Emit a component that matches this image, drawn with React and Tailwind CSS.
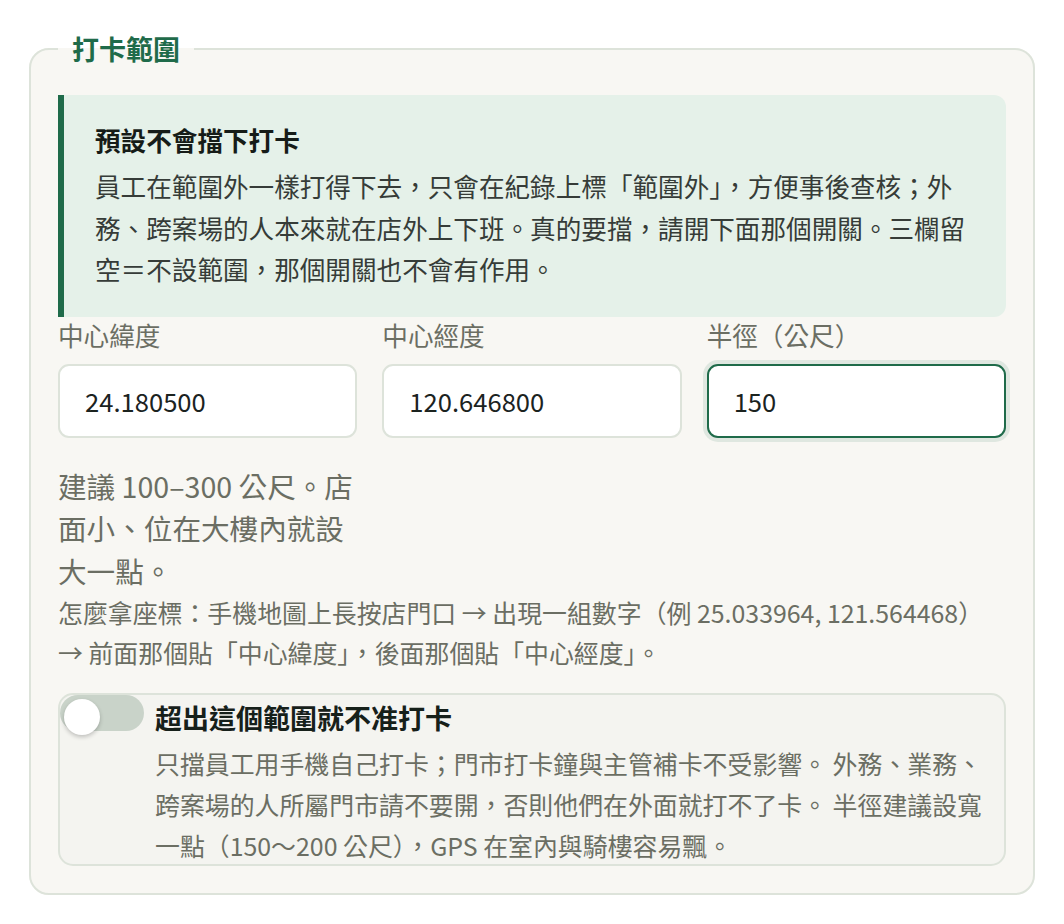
import React from "react";

function Field({ label, value, active }) {
  return (
    <div className="flex flex-col">
      <label className="text-[25.6px] leading-[36px] text-[#6b6e63]">{label}</label>
      <input
        defaultValue={value}
        className={
          active
            ? "mt-[11px] h-[74px] w-full rounded-[11px] border-2 border-[#1f6b4a] bg-white px-[25px] text-[25.6px] text-[#1b231f] outline-none ring-4 ring-[#dfe7e0]"
            : "mt-[11px] h-[74px] w-full rounded-[11px] border-2 border-[#dde3da] bg-white px-[25px] text-[25.6px] text-[#1b231f] outline-none"
        }
      />
    </div>
  );
}

export default function App() {
  return (
    <div className="bg-white p-[29px] font-[family-name:'Noto_Sans_CJK_TC','Noto_Sans',sans-serif]">
      <fieldset className="rounded-[20px] border-2 border-[#dde3da] bg-[#f8f7f3] px-[27px] pb-[27px] pt-[27px]">
        <legend className="ml-0 px-[14px] text-[27px] font-bold leading-[39px] text-[#1f6b4a]">
          打卡範圍
        </legend>

        {/* default-behaviour notice */}
        <div className="rounded-r-[12px] border-l-[6px] border-[#1f6b4a] bg-[#e5f1e9] pb-[27px] pl-[31px] pr-[30px] pt-[26px]">
          <div className="text-[25.6px] font-bold leading-[38px] text-[#161c18]">預設不會擋下打卡</div>
          <p className="mt-[6px] text-[25.6px] leading-[41.5px] text-[#363c38]">
            員工在範圍外一樣打得下去，只會在紀錄上標「範圍外」，方便事後查核；外務、跨案場的人本來就在店外上下班。真的要擋，請開下面那個開關。三欄留空＝不設範圍，那個開關也不會有作用。
          </p>
        </div>

        {/* coordinates + radius */}
        <div className="grid grid-cols-3 gap-x-[25px] gap-y-[27px]">
          <Field label="中心緯度" value="24.180500" />
          <Field label="中心經度" value="120.646800" />
          <Field label="半徑（公尺）" value="150" active />
          <p className="text-[28.6px] leading-[42.5px] text-[#6b6e63]">
            建議 100–300 公尺。店面小、位在大樓內就設大一點。
          </p>
        </div>
        <p className="text-[24.9px] leading-[40px] text-[#6b6e63]">
          怎麼拿座標：手機地圖上長按店門口 → 出現一組數字（例 25.033964, 121.564468）
          <br />→ 前面那個貼「中心緯度」，後面那個貼「中心經度」。
        </p>

        {/* strict geofence switch */}
        <div className="mt-[21px] flex items-start gap-[11px] rounded-[15px] border-2 border-[#dde3da] bg-[#f4f4f0] pr-[12px]">
          <button
            type="button"
            className="relative h-[36px] w-[84px] shrink-0 rounded-full bg-[#c9d3c9]"
          >
            <span className="absolute left-[4px] top-[4px] h-[36px] w-[36px] rounded-full bg-white shadow-[0_2px_4px_rgba(0,0,0,0.22)]" />
          </button>
          <div className="-mb-[2px] pt-[3px]">
            <div className="text-[27px] font-bold leading-[40px] text-[#16201a]">超出這個範圍就不准打卡</div>
            <p className="mt-[5px] text-[24.9px] leading-[41px] text-[#6b6e63]">
              只擋員工用手機自己打卡；門市打卡鐘與主管補卡不受影響。 外務、業務、跨案場的人所屬門市請不要開，否則他們在外面就打不了卡。 半徑建議設寬一點（150～200 公尺），GPS 在室內與騎樓容易飄。
            </p>
          </div>
        </div>
      </fieldset>
    </div>
  );
}
